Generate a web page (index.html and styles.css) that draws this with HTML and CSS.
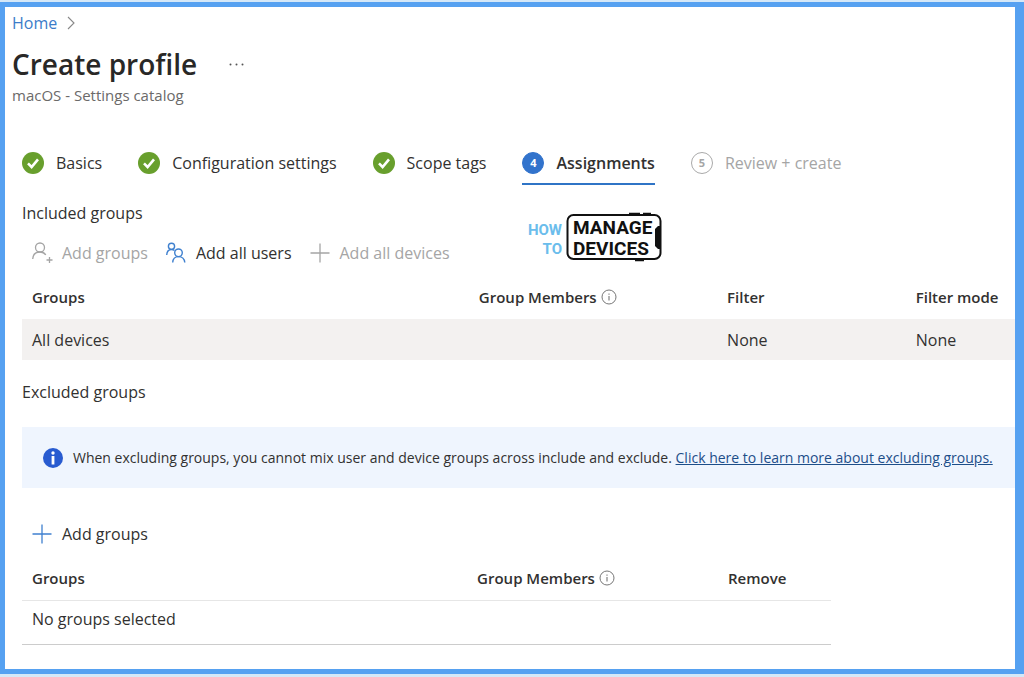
FILE: index.html
```
<!DOCTYPE html>
<html lang="en">
<head>
  <meta charset="UTF-8">
  <meta name="viewport" content="width=device-width, initial-scale=1">
  <title>Create profile</title>
  <link rel="stylesheet" href="styles.css">
</head>
<body>
  <!-- shared icons -->
  <svg class="sprite" width="0" height="0" aria-hidden="true">
    <symbol id="check" viewBox="0 0 22 22">
      <circle cx="11" cy="11" r="11" fill="#689f2d"/>
      <path d="M6 11.4l3.6 3.6L16 7.4" fill="none" stroke="#fff" stroke-width="2.6"/>
    </symbol>
    <symbol id="plus" viewBox="0 0 20 20">
      <path d="M10 0.5v19M0.5 10h19" fill="none" stroke="currentColor" stroke-width="1.3"/>
    </symbol>
    <symbol id="info" viewBox="0 0 16 16">
      <circle cx="8" cy="8" r="7" fill="none" stroke="#777" stroke-width="1"/>
      <path d="M8 7v4.5M8 4.5v1.2" fill="none" stroke="#777" stroke-width="1.1"/>
    </symbol>
  </svg>

  <main class="page">
    <header class="page-header">
      <nav class="breadcrumb" aria-label="Breadcrumb">
        <a href="#">Home</a>
        <svg width="8" height="14" viewBox="0 0 8 14"><path d="M1 1l6 6-6 6" fill="none" stroke="#888" stroke-width="1.1"/></svg>
      </nav>
      <div class="title-row">
        <h1>Create profile</h1>
        <button class="more" type="button" aria-label="More">
          <svg width="15" height="3" viewBox="0 0 15 3" fill="#555"><circle cx="1.5" cy="1.5" r="1"/><circle cx="7.5" cy="1.5" r="1"/><circle cx="13.5" cy="1.5" r="1"/></svg>
        </button>
      </div>
      <p class="subtitle">macOS - Settings catalog</p>
    </header>

    <div class="content">
      <nav class="steps" aria-label="Steps">
        <button class="step" type="button"><svg class="step-icon"><use href="#check"/></svg>Basics</button>
        <button class="step" type="button"><svg class="step-icon"><use href="#check"/></svg>Configuration settings</button>
        <button class="step" type="button"><svg class="step-icon"><use href="#check"/></svg>Scope tags</button>
        <button class="step active" type="button" aria-current="step"><span class="step-icon number">4</span>Assignments</button>
        <button class="step upcoming" type="button" disabled><span class="step-icon number">5</span>Review + create</button>
      </nav>

      <section class="included">
        <div>
          <h2>Included groups</h2>
          <div class="toolbar">
            <button class="command" type="button" disabled>
              <svg width="20" height="20" viewBox="0 0 20 20" fill="none" stroke="currentColor" stroke-width="1.3"><circle cx="8" cy="4.5" r="4.5"/><path d="M0.7 16C1 11.500 4 9 8 9c2.600 0 4.600 1.200 5.800 3M17.500 14v6M14.500 17h6"/></svg>
              Add groups
            </button>
            <button class="command" type="button">
              <svg class="blue" width="20" height="20" viewBox="0 0 20 20" fill="none" stroke="currentColor" stroke-width="1.4"><circle cx="5.500" cy="3.300" r="3.100"/><path d="M0.700 12C0.900 8.500 2.600 6.500 5.500 6.500c1.300 0 2.300.4 3 1"/><circle cx="12.500" cy="9.800" r="3.800"/><path d="M6.700 19.500c.2-3.800 2.400-5.900 5.800-5.900s5.900 2.100 6.300 5.900"/></svg>
              Add all users
            </button>
            <button class="command" type="button" disabled>
              <svg width="20" height="20"><use href="#plus"/></svg>
              Add all devices
            </button>
          </div>
        </div>

        <svg class="logo" width="134" height="50" viewBox="0 0 134 50" role="img" aria-label="How to manage devices">
          <g class="logo-blue" text-anchor="end">
            <text x="34" y="23">HOW</text>
            <text x="34" y="42">TO</text>
          </g>
          <rect x="39.500" y="3" width="93" height="44" rx="6" fill="none" stroke="#111" stroke-width="2"/>
          <path d="M101 1.500h11M115 1.500h8M107 48.500h9" stroke="#111" stroke-width="1.500"/>
          <path d="M133 14h-3l-3 3v17l3 3h3z" fill="#111"/>
          <g class="logo-black">
            <text x="45" y="22">MANAGE</text>
            <text x="45" y="43">DEVICES</text>
          </g>
        </svg>
      </section>

      <table class="groups">
        <thead>
          <tr>
            <th class="col-groups">Groups</th>
            <th class="col-members">Group Members <svg class="info"><use href="#info"/></svg></th>
            <th class="col-filter">Filter</th>
            <th>Filter mode</th>
          </tr>
        </thead>
        <tbody>
          <tr>
            <td>All devices</td>
            <td></td>
            <td>None</td>
            <td>None</td>
          </tr>
        </tbody>
      </table>

      <h2>Excluded groups</h2>

      <div class="banner">
        <svg width="20" height="20" viewBox="0 0 20 20"><circle cx="10" cy="10" r="10" fill="#285bd0"/><circle cx="10" cy="5" r="1.700" fill="#fff"/><path d="M10 8v8.500" stroke="#fff" stroke-width="2.800"/></svg>
        <p>When excluding groups, you cannot mix user and device groups across include and exclude. <a href="#">Click here to learn more about excluding groups.</a></p>
      </div>

      <div class="toolbar">
        <button class="command" type="button">
          <svg class="blue" width="20" height="20"><use href="#plus"/></svg>
          Add groups
        </button>
      </div>

      <table class="groups excluded">
        <thead>
          <tr>
            <th class="col-groups">Groups</th>
            <th class="col-members">Group Members <svg class="info"><use href="#info"/></svg></th>
            <th>Remove</th>
          </tr>
        </thead>
        <tbody>
          <tr>
            <td colspan="3">No groups selected</td>
          </tr>
        </tbody>
      </table>
    </div>
  </main>
</body>
</html>
```
FILE: styles.css
```
* {
  box-sizing: border-box;
}
body {
  margin: 0;
  padding: 2px 0 3px;
  min-height: 100vh;
  display: flex;
  background: #d5e8f8;
  color: #323130;
  font-family: "Open Sans", "Segoe UI", sans-serif;
  font-size: 16px;
  line-height: 24px;
}
h1, h2, p {
  margin: 0;
}
button {
  padding: 0;
  border: none;
  background: none;
  color: inherit;
  font: inherit;
  cursor: pointer;
}
button:disabled {
  color: #a5a5a5;
  cursor: default;
}
svg {
  flex: none;
}
.sprite {
  position: absolute;
}
.page {
  flex: 1;
  min-width: 0;
  border: 5px solid #56a1f1;
  border-right-width: 9px;
  background: #fff;
}
.page-header {
  padding: 4px 7px 0;
}
.breadcrumb {
  display: flex;
  align-items: center;
  gap: 10px;
}
.breadcrumb a {
  color: #3b7cc9;
  text-decoration: none;
}
.title-row {
  display: flex;
  align-items: center;
  gap: 32px;
  padding-top: 8px;
}
h1 {
  font-size: 28px;
  font-weight: 600;
  line-height: 42px;
  color: #292827;
}
.more {
  display: flex;
}
.subtitle {
  font-size: 15px;
  line-height: 20px;
  color: #6b6a69;
}
.content {
  padding-left: 17px;
}
.steps {
  display: flex;
  gap: 36px;
  padding-top: 46px;
}
.step {
  display: flex;
  align-items: center;
  gap: 12px;
  padding-bottom: 8px;
  border-bottom: 2px solid transparent;
  white-space: nowrap;
}
.step-icon {
  width: 22px;
  height: 22px;
}
.number {
  border-radius: 50%;
  font-size: 11px;
  font-weight: 700;
  line-height: 20px;
  border: 1px solid #aaa;
}
.active {
  font-weight: 600;
  border-bottom-color: #2f74c6;
}
.active .number {
  background: #3273cc;
  border-color: #3273cc;
  color: #fff;
}
h2 {
  font-size: 16px;
  font-weight: 400;
  line-height: 24px;
}
.included {
  display: flex;
  align-items: center;
  gap: 78px;
  padding-top: 16px;
}
.toolbar {
  display: flex;
  gap: 18px;
  padding: 16px 0 0 10px;
}
.command {
  display: flex;
  align-items: center;
  gap: 10px;
  white-space: nowrap;
}
.command svg {
  overflow: visible;
}
.blue {
  color: #3f80cf;
}
.logo {
  margin-top: 8px;
  font-family: "Liberation Sans Narrow", Roboto, sans-serif;
  font-weight: 700;
}
.logo-blue {
  font-size: 15px;
  fill: #6bbdec;
}
.logo-black {
  font-size: 19px;
  fill: #111;
}
.groups {
  width: 100%;
  margin-top: 10px;
  border-collapse: collapse;
  table-layout: fixed;
}
.groups th, .groups td {
  padding: 9px 0 8px 10px;
  text-align: left;
  white-space: nowrap;
}
.groups th {
  padding: 10px 0 10px 10px;
  font-size: 15px;
  font-weight: 600;
}
.groups td {
  background: #f3f1f0;
}
.col-groups {
  width: 45%;
}
.col-members {
  width: 25%;
}
.col-filter {
  width: 19%;
}
.info {
  width: 16px;
  height: 16px;
  vertical-align: -2px;
}
.groups + h2 {
  padding-top: 20px;
}
.banner {
  display: flex;
  align-items: center;
  gap: 10px;
  margin: 23px 0 18px;
  padding: 21px 0 20px 21px;
  background: #eff5fe;
}
.banner p {
  font-size: 14px;
  line-height: 20px;
}
.banner a {
  color: #1d4e89;
}
.groups.excluded {
  width: 81.5%;
}
.excluded .col-groups {
  width: 55%;
}
.excluded .col-members {
  width: 31%;
}
.groups.excluded td {
  padding: 6px 0 13px 10px;
  background: none;
  border-top: 1px solid #e6e6e6;
  border-bottom: 1px solid #ccc;
}
```
